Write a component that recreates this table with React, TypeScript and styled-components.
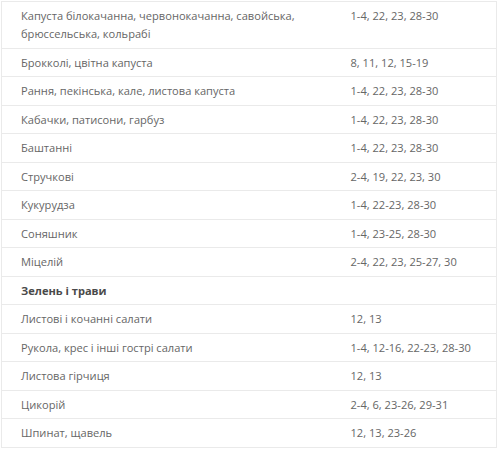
import React from "react";
import styled, { createGlobalStyle } from "styled-components";

const Global = createGlobalStyle`
  html, body { margin: 0; padding: 0; background: #ffffff; }
  body { font-family: "Open Sans", "Noto Sans", sans-serif; }
`;

const Wrap = styled.div`
  padding: 1px 0 0 1px;
`;

const Table = styled.table`
  width: 496px;
  border-collapse: collapse;
  border: 1px solid #eaeaea;
  font-size: 11.1px;
  line-height: 18.3px;
  color: #666666;
`;

const Row = styled.tr`
  border-top: 1px solid #eaeaea;
`;

const Cell = styled.td<{ $wide?: boolean; $bold?: boolean }>`
  padding: 5px 10px 4.2px 19px;
  vertical-align: top;
  white-space: nowrap;
  width: ${(p) => (p.$wide ? "66.67%" : "auto")};
  font-weight: ${(p) => (p.$bold ? 700 : 400)};
  color: ${(p) => (p.$bold ? "#4a4a4a" : "#666666")};
`;

const rows: [string, string, boolean?][] = [
  ["Капуста білокачанна, червонокачанна, савойська, брюссельська, кольрабі", "1-4, 22, 23, 28-30"],
  ["Броккол\u0456, цвітна капуста", "8, 11, 12, 15-19"],
  ["Рання, пекінська, кале, листова капуста", "1-4, 22, 23, 28-30"],
  ["Кабачки, патисони, гарбуз", "1-4, 22, 23, 28-30"],
  ["Баштанні", "1-4, 22, 23, 28-30"],
  ["Стручкові", "2-4, 19, 22, 23, 30"],
  ["Кукурудза", "1-4, 22-23, 28-30"],
  ["Соняшник", "1-4, 23-25, 28-30"],
  ["Міцелій", "2-4, 22, 23, 25-27, 30"],
  ["Зелень і трави", "", true],
  ["Листові і кочанні салати", "12, 13"],
  ["Рукола, крес і інші гострі салати", "1-4, 12-16, 22-23, 28-30"],
  ["Листова гірчиця", "12, 13"],
  ["Цикорій", "2-4, 6, 23-26, 29-31"],
  ["Шпинат, щавель", "12, 13, 23-26"],
];

export default function App() {
  return (
    <>
      <Global />
      <Wrap>
        <Table>
          <tbody>
            {rows.map(([name, days, bold], i) => (
              <Row key={i}>
                <Cell $wide $bold={bold}>
                  {i === 0 ? (
                    <>
                      Капуста білокачанна, червонокачанна, савойська,
                      <br />
                      брюссельська, кольрабі
                    </>
                  ) : (
                    name
                  )}
                </Cell>
                <Cell>{days}</Cell>
              </Row>
            ))}
          </tbody>
        </Table>
      </Wrap>
    </>
  );
}
